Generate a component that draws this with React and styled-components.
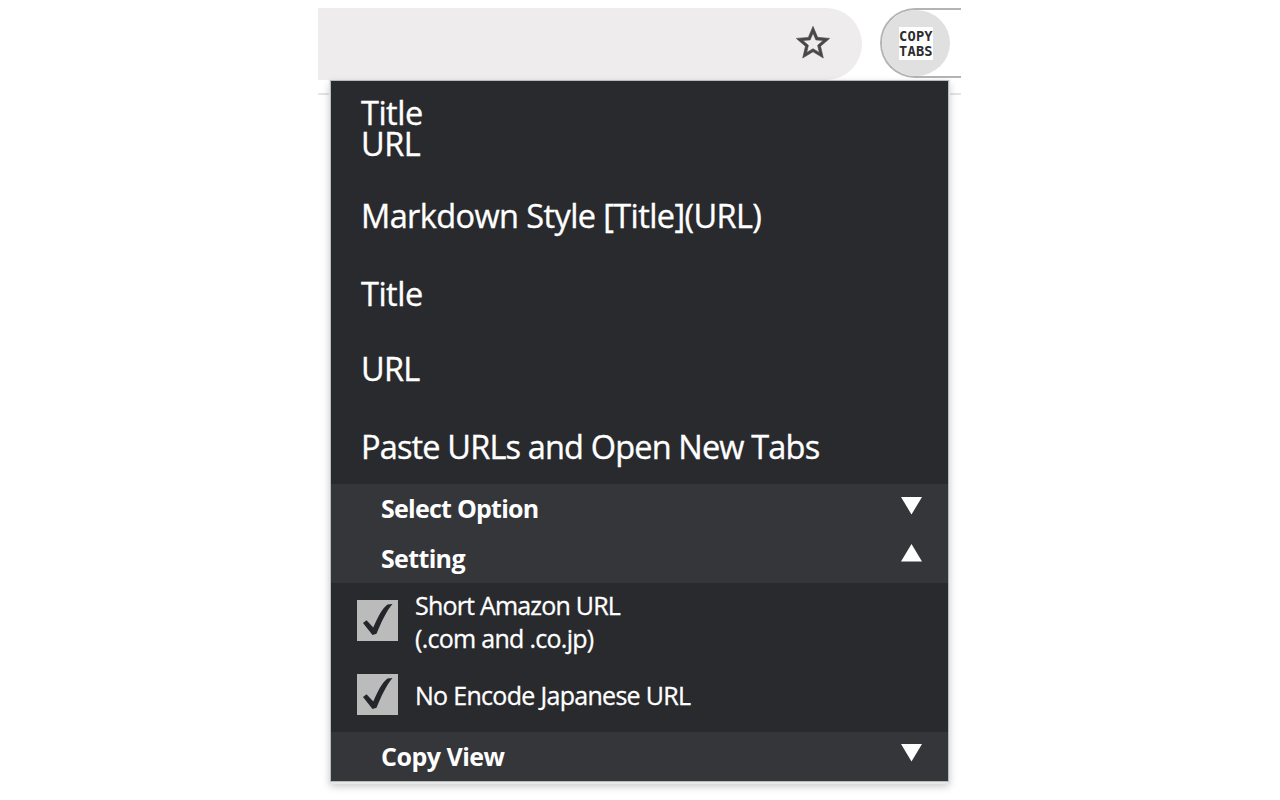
import React from "react";
import styled, { createGlobalStyle } from "styled-components";

const GlobalStyle = createGlobalStyle`
  body {
    margin: 0;
    background: #fff;
    font-family: "Open Sans", "Noto Sans", sans-serif;
  }
`;

const Page = styled.div`
  box-sizing: border-box;
  width: 1280px;
  height: 800px;
  padding: 8px 319px 0 318px;
  overflow: hidden;
  background: #fff;
`;

const Toolbar = styled.header`
  display: flex;
  align-items: flex-start;
  justify-content: space-between;
  height: 85px;
  border-bottom: 2px solid #e4e4e4;
`;

const AddressBar = styled.div`
  box-sizing: border-box;
  display: flex;
  justify-content: flex-end;
  width: 544px;
  height: 72px;
  padding: 15px 29px 0 0;
  border-radius: 0 36px 36px 0;
  background: #eeeced;
`;

const StarIcon = styled.svg`
  width: 40px;
  height: 40px;
  fill: #48484a;
  stroke: #48484a;
  stroke-width: 0.35px;
`;

const ExtensionTray = styled.div`
  box-sizing: border-box;
  width: 81px;
  height: 70px;
  border: 2px solid #b4b4b4;
  border-right: 0;
  border-radius: 35px 0 0 35px;
`;

const ExtensionButton = styled.div`
  display: flex;
  align-items: center;
  justify-content: center;
  width: 68px;
  height: 66px;
  border-radius: 50%;
  background: #e0e0e0;
`;

const Logo = styled.div`
  width: 34px;
  height: 33px;
  padding-top: 2px;
  box-sizing: border-box;
  background: #fff;
  color: #2c2c2e;
  font: bold 13.7px/15px "DejaVu Sans Mono", monospace;
  letter-spacing: 0.2px;
  white-space: nowrap;
`;

const Popup = styled.main`
  position: relative;
  width: 617px;
  margin: -14px 0 0 13px;
  background: #292a2d;
  color: #fff;
  box-shadow: 0 0 0 1px #b9bcbc, 0 1px 1px 2px #e5e6e6, 0 4px 8px 1px rgba(0, 0, 0, 0.24);
`;

const MenuItem = styled.div`
  box-sizing: border-box;
  height: ${(p) => p.$height}px;
  padding: ${(p) => p.$top}px 0 0 30px;
  font-size: 32.5px;
  line-height: 31px;
  letter-spacing: ${(p) => p.$spacing}px;
  -webkit-text-stroke: 0.35px #fff;
  white-space: nowrap;
`;

const SectionHeader = styled.div`
  box-sizing: border-box;
  display: flex;
  justify-content: space-between;
  height: ${(p) => p.$height}px;
  padding: 0 26px 0 50px;
  background: #35363a;
  font-size: 25px;
  font-weight: 700;
  line-height: ${(p) => p.$height - 1}px;
  letter-spacing: ${(p) => p.$spacing}px;
`;

const Arrow = styled.svg`
  width: 21px;
  height: 18px;
  margin-top: ${(p) => p.$top}px;
  fill: #fff;
`;

const Settings = styled.div`
  box-sizing: border-box;
  height: 149px;
  padding: 6px 0 0 26px;
`;

const SettingRow = styled.label`
  display: flex;
  align-items: center;
  height: ${(p) => p.$height}px;
  gap: 17px;
  font-size: 25px;
  line-height: 33px;
  -webkit-text-stroke: 0.3px #fff;
  white-space: nowrap;
`;

const CheckBox = styled.svg`
  width: 41px;
  height: 41px;
  background: #bbb;
`;

const Label = styled.div`
  padding-top: ${(p) => p.$top}px;
`;

const Line = styled.div`
  letter-spacing: ${(p) => p.$spacing}px;
`;

function Star() {
  return (
    <StarIcon viewBox="0 0 24 24">
      <path d="M22 9.240l-7.190-.620L12 2 9.190 8.630 2 9.240l5.460 4.730L5.820 21 12 17.270 18.180 21l-1.630-7.030L22 9.240zM12 15.400l-3.760 2.270 1-4.280-3.320-2.880 4.380-.380L12 6.100l1.710 4.040 4.380.380-3.320 2.880 1 4.280L12 15.400z" />
    </StarIcon>
  );
}

function Check() {
  return (
    <CheckBox viewBox="0 0 41 41">
      <path
        d="M6 23L9.500 20.300L16.300 27.500C20 19 24.500 9 30.500 4.500L35.500 4C29 11.500 24 23 19.500 33.800L15.500 35Z"
        fill="#25262b"
      />
    </CheckBox>
  );
}

function Section({ title, open, height, arrowTop, spacing }) {
  return (
    <SectionHeader $height={height} $spacing={spacing}>
      <span>{title}</span>
      <Arrow $top={arrowTop} viewBox="0 0 21 18">
        <path d={open ? "M10.500 0L21 17.500H0Z" : "M0 0H21L10.500 17.500Z"} />
      </Arrow>
    </SectionHeader>
  );
}

export default function App() {
  return (
    <>
      <GlobalStyle />
      <Page>
        <Toolbar>
          <AddressBar>
            <Star />
          </AddressBar>
          <ExtensionTray>
            <ExtensionButton>
              <Logo>COPY<br />TABS</Logo>
            </ExtensionButton>
          </ExtensionTray>
        </Toolbar>
        <Popup>
          <MenuItem $height={96} $top={15.5} $spacing={-0.5}>Title<br />URL</MenuItem>
          <MenuItem $height={77} $top={22.5} $spacing={-0.6}>Markdown Style [Title](URL)</MenuItem>
          <MenuItem $height={77} $top={23.5} $spacing={-0.5}>Title</MenuItem>
          <MenuItem $height={76} $top={21.5} $spacing={-0.7}>URL</MenuItem>
          <MenuItem $height={77} $top={23.5} $spacing={-0.84}>Paste URLs and Open New Tabs</MenuItem>
          <Section title="Select Option" height={50} arrowTop={13} spacing={-0.75} />
          <Section title="Setting" open height={49} arrowTop={10} spacing={-0.65} />
          <Settings>
            <SettingRow $height={62}>
              <Check />
              <Label $top={3}>
                <Line $spacing={-0.8}>Short Amazon URL</Line>
                <Line $spacing={-0.72}>(.com and .co.jp)</Line>
              </Label>
            </SettingRow>
            <SettingRow $height={86}>
              <Check />
              <Label $top={3}>
                <Line $spacing={-0.7}>No Encode Japanese URL</Line>
              </Label>
            </SettingRow>
          </Settings>
          <Section title="Copy View" height={49} arrowTop={12} spacing={-0.5} />
        </Popup>
      </Page>
    </>
  );
}
